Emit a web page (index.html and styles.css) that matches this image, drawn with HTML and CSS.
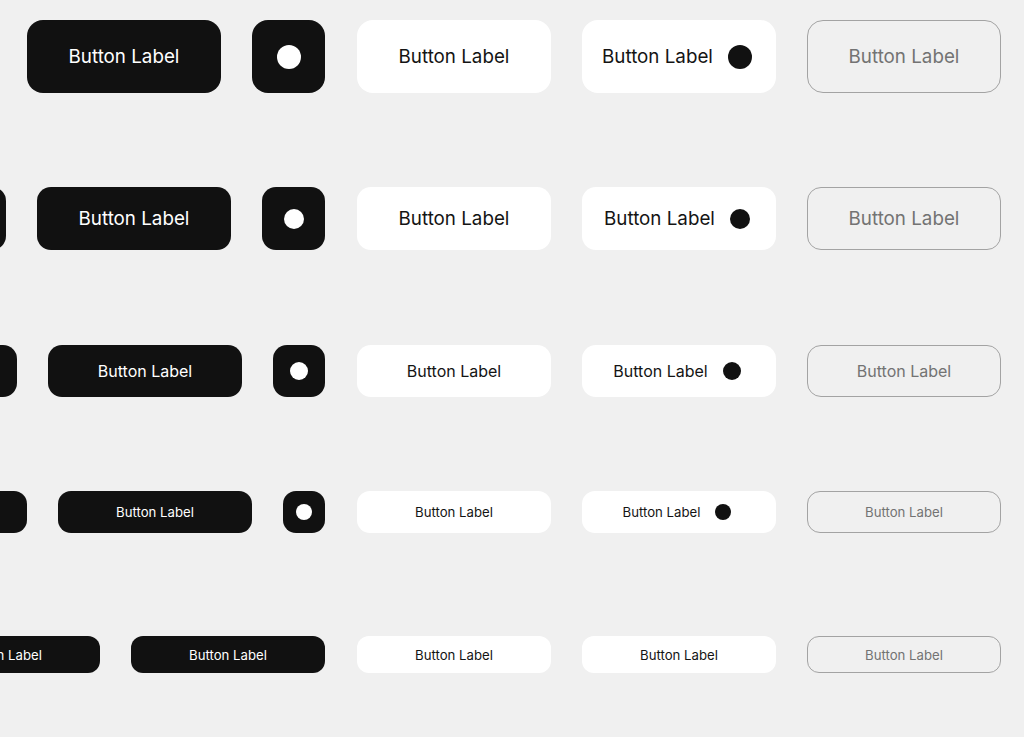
FILE: index.html
```html
<!DOCTYPE html>
<html lang="en">
<head>
  <meta charset="UTF-8" />
  <title>Buttons</title>
  <link rel="stylesheet" href="styles.css">
</head>
<body>

  <div class="sheet">

    <div class="row size-xl">
      <div class="dark-group">
        <div class="btn dark">Button Label</div>
        <div class="btn dark square"><span class="dot"></span></div>
      </div>
      <div class="btn light">Button Label</div>
      <div class="btn light with-dot">Button Label <span class="dot"></span></div>
      <div class="btn outline">Button Label</div>
    </div>

    <div class="row size-lg">
      <div class="dark-group">
        <div class="btn dark"></div>
        <div class="btn dark">Button Label</div>
        <div class="btn dark square"><span class="dot"></span></div>
      </div>
      <div class="btn light">Button Label</div>
      <div class="btn light with-dot">Button Label <span class="dot"></span></div>
      <div class="btn outline">Button Label</div>
    </div>

    <div class="row size-md">
      <div class="dark-group">
        <div class="btn dark"></div>
        <div class="btn dark">Button Label</div>
        <div class="btn dark square"><span class="dot"></span></div>
      </div>
      <div class="btn light">Button Label</div>
      <div class="btn light with-dot">Button Label <span class="dot"></span></div>
      <div class="btn outline">Button Label</div>
    </div>

    <div class="row size-sm">
      <div class="dark-group">
        <div class="btn dark"></div>
        <div class="btn dark">Button Label</div>
        <div class="btn dark square"><span class="dot"></span></div>
      </div>
      <div class="btn light">Button Label</div>
      <div class="btn light with-dot">Button Label <span class="dot"></span></div>
      <div class="btn outline">Button Label</div>
    </div>

    <div class="row size-xs">
      <div class="dark-group">
        <div class="btn dark">Button Label</div>
        <div class="btn dark">Button Label</div>
      </div>
      <div class="btn light">Button Label</div>
      <div class="btn light">Button Label</div>
      <div class="btn outline">Button Label</div>
    </div>

  </div>

</body>
</html>
```

FILE: styles.css
```css
body {
  margin: 0;
  background: #f0f0f0;
  font-family: "Inter", "Noto Sans", sans-serif;
  overflow: hidden;
}
.sheet {
  display: flex;
  flex-direction: column;
  padding-top: 20px;
}
.row {
  display: flex;
  gap: 32px;
  width: 1001px;
}
.dark-group {
  display: flex;
  justify-content: flex-end;
  gap: 31px;
  width: 325px;
  flex-shrink: 0;
}
.btn {
  box-sizing: border-box;
  width: 194px;
  flex-shrink: 0;
  display: flex;
  align-items: center;
  justify-content: center;
  border-radius: 16px;
  color: #141414;
  font-weight: 400;
  white-space: nowrap;
}
.btn.light + .btn {
  margin-left: -1px;
}
.btn.dark {
  background: #111;
  color: #fff;
}
.btn.light {
  background: #fff;
}
.btn.with-dot {
  padding-right: 4px;
}
.btn.outline {
  border: 1px solid #a3a3a3;
  color: #737373;
}
.btn .dot {
  display: inline-block;
  border-radius: 50%;
  background: #111;
  margin-left: 15px;
}
.btn.square .dot {
  background: #fff;
  margin-left: 0;
}

/* sizes */
.size-xl .btn { height: 73px; font-size: 18.8px; }
.size-xl .square { width: 73px; }
.size-xl .dot { width: 24px; height: 24px; }

.size-lg { margin-top: 94px; }
.size-lg .btn { height: 63px; font-size: 18.8px; border-radius: 14px; }
.size-lg .square { width: 63px; }
.size-lg .dot { width: 20px; height: 20px; }

.size-md { margin-top: 95px; }
.size-md .btn { height: 52px; font-size: 16px; border-radius: 14px; }
.size-md .square { width: 52px; }
.size-md .dot { width: 18px; height: 18px; }

.size-sm { margin-top: 94px; }
.size-sm .btn { height: 42px; font-size: 13.2px; border-radius: 13px; }
.size-sm .square { width: 42px; }
.size-sm .dot { width: 16px; height: 16px; }

.size-xs { margin-top: 103px; }
.size-xs .btn { height: 37px; font-size: 13.2px; border-radius: 12px; }
```
